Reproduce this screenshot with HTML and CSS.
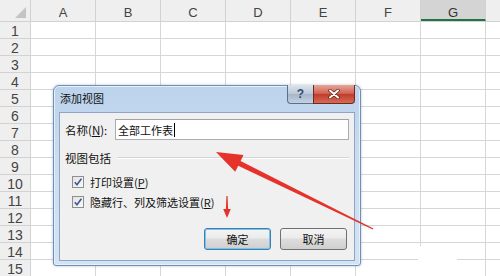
FILE: index.html
```html
<!DOCTYPE html>
<html lang="zh-CN">
<head>
  <meta charset="UTF-8" />
  <title>添加视图</title>
  <link rel="stylesheet" href="styles.css">
</head>
<body>

<div class="sheet">
  <div class="col-head">
    <div class="corner"><span class="tri"></span></div>
    <div class="ch">A</div>
    <div class="ch">B</div>
    <div class="ch">C</div>
    <div class="ch">D</div>
    <div class="ch">E</div>
    <div class="ch">F</div>
    <div class="ch selected">G</div>
    <div class="ch last"></div>
  </div>
  <div class="body">
    <div class="row-head">
      <div class="rh">1</div><div class="rh">2</div><div class="rh">3</div>
      <div class="rh">4</div><div class="rh">5</div><div class="rh">6</div>
      <div class="rh">7</div><div class="rh">8</div><div class="rh">9</div>
      <div class="rh">10</div><div class="rh">11</div><div class="rh">12</div>
      <div class="rh">13</div><div class="rh">14</div><div class="rh">15</div>
    </div>
    <div class="cells"></div>
  </div>
</div>

<div class="patch"></div>

<!-- 添加视图 dialog -->
<div class="dialog">
  <div class="titlebar">
    <span class="title">添加视图</span>
    <div class="caption-btns">
      <span class="cap-help">?</span>
      <span class="cap-close">
        <svg width="14" height="10" viewBox="0 0 14 10">
          <path d="M3 1.5 L11 8.5 M11 1.5 L3 8.5" stroke="#5a1f1a" stroke-width="3.4" stroke-linecap="round"/>
          <path d="M3 1.5 L11 8.5 M11 1.5 L3 8.5" stroke="#fff" stroke-width="2" stroke-linecap="round"/>
        </svg>
      </span>
    </div>
  </div>
  <div class="client">
    <div class="name-row">
      <label class="name-label">名称(<u>N</u>):</label>
      <div class="name-input">全部工作表<span class="caret"></span></div>
    </div>
    <div class="group">
      <span>视图包括</span>
      <i class="group-line"></i>
    </div>
    <label class="check first">
      <span class="box"><svg width="10" height="10" viewBox="0 0 10 10"><path d="M1.8 5.2 L4 7.8 L8.4 1.8" fill="none" stroke="#3e5a95" stroke-width="1.6"/></svg></span>
      打印设置(<u>P</u>)
    </label>
    <label class="check">
      <span class="box"><svg width="10" height="10" viewBox="0 0 10 10"><path d="M1.8 5.2 L4 7.8 L8.4 1.8" fill="none" stroke="#3e5a95" stroke-width="1.6"/></svg></span>
      隐藏行、列及筛选设置(<u>R</u>)
    </label>
    <div class="buttons">
      <button class="btn default">确定</button>
      <button class="btn">取消</button>
    </div>
  </div>
</div>

<!-- red annotation arrows -->
<svg class="marks" width="500" height="276" viewBox="0 0 500 276">
  <polygon fill="#e5322b" points="216,152 243.5,155 240.6,161 373.4,228.6 372.8,229.6 238.2,165.8 235.2,171.8"/>
  <polygon fill="#e5322b" points="227,218 230.8,209 228.1,209 227.6,196 226.4,196 225.9,209 223.2,209"/>
</svg>

</body>
</html>
```

FILE: styles.css
```css
* {
  box-sizing: border-box;
}
body {
  margin: 0;
  width: 500px;
  height: 276px;
  overflow: hidden;
  background: #fff;
  font-family: "Noto Sans CJK SC", "Liberation Sans", sans-serif;
  position: relative;
}

/* sheet */
.sheet {
  width: 500px;
  overflow: hidden;
}
.col-head {
  display: flex;
  height: 22px;
  background: #efefef;
  border-bottom: 1px solid #d2d2d2;
  overflow: hidden;
}
.corner {
  width: 31px;
  flex: none;
  border-right: 1px solid #d2d2d2;
  position: relative;
}
.corner .tri {
  position: absolute;
  right: 4px;
  bottom: 3px;
  width: 0;
  height: 0;
  border-left: 11px solid transparent;
  border-bottom: 11px solid #c4c4c4;
}
.ch {
  width: 65px;
  flex: none;
  border-right: 1px solid #d2d2d2;
  padding-top: 5px;
  text-align: center;
  font-family: "Liberation Sans", sans-serif;
  font-size: 13px;
  line-height: 16px;
  color: #444;
}
.ch.last {
  width: 14px;
  border-right: none;
}
.ch.selected {
  background: #d4d4d4;
  border-bottom: 2px solid #217346;
  color: #333;
}
.body {
  display: flex;
}
.row-head {
  width: 31px;
  flex: none;
  background: #efefef;
  border-right: 1px solid #d2d2d2;
}
.rh {
  height: 17px;
  border-bottom: 1px solid #d2d2d2;
  text-align: center;
  font-family: "Liberation Sans", sans-serif;
  font-size: 14px;
  line-height: 18px;
  color: #444;
}
.cells {
  flex: 1;
  height: 255px;
  background-color: #fff;
  background-image:
    linear-gradient(to right, transparent 64px, #d6d6d6 64px),
    linear-gradient(to bottom, transparent 16px, #d6d6d6 16px);
  background-size: 65px 17px;
}
.patch {
  position: absolute;
  left: 418px;
  top: 246px;
  width: 39px;
  height: 30px;
  background: #fff;
}

/* dialog */
.dialog {
  position: absolute;
  left: 53px;
  top: 85px;
  width: 308px;
  height: 181px;
  border: 1px solid #6f8fb6;
  border-radius: 6px 6px 3px 3px;
  background: linear-gradient(to bottom, #bcd3ec, #c9dcf1 40%, #d3e3f4);
  box-shadow: 0 0 3px rgba(60, 80, 110, 0.35), inset 0 0 0 1px #e6effa;
  padding: 0 5px 4px 5px;
  display: flex;
  flex-direction: column;
}
.titlebar {
  height: 26px;
  display: flex;
  justify-content: space-between;
  align-items: flex-start;
}
.title {
  padding: 4px 0 0 1px;
  font-size: 11px;
  line-height: 16px;
  color: #111;
}
.caption-btns {
  display: flex;
  margin-top: -1px;
}
.cap-help,
.cap-close {
  height: 19px;
  display: flex;
  align-items: center;
  justify-content: center;
  border: 1px solid #5f6f82;
  border-top: none;
}
.cap-help {
  width: 26px;
  border-radius: 0 0 0 4px;
  border-right: none;
  background: linear-gradient(to bottom, #dbe4ee, #b9c7d7 50%, #a5b6ca 51%, #c3d2e2);
  font-family: "Liberation Sans", sans-serif;
  font-weight: bold;
  font-size: 12px;
  color: #3a4b63;
}
.cap-close {
  width: 42px;
  border-radius: 0 0 4px 0;
  border-color: #6d2a22;
  background: linear-gradient(to bottom, #e6a699, #cf5d4d 50%, #c23a2a 51%, #d66a55);
}
.client {
  flex: 1;
  background: #f0f0f0;
  border: 1px solid #8ea6c4;
  padding: 6px 5px 0 5px;
  font-size: 11px;
  color: #111;
}
.name-row {
  display: flex;
  align-items: center;
  height: 21px;
}
.name-label {
  width: 50px;
  flex: none;
  font-size: 11.5px;
}
.name-input {
  flex: 1;
  height: 21px;
  background: #fff;
  border: 1px solid #abadb3;
  border-top-color: #9fa3ab;
  padding-left: 2px;
  display: flex;
  align-items: center;
  font-size: 11px;
}
.caret {
  width: 1px;
  height: 14px;
  background: #000;
  margin-left: 1px;
}
.group {
  margin-top: 11px;
  height: 14px;
  display: flex;
  align-items: center;
  font-size: 11.5px;
}
.group-line {
  flex: 1;
  height: 2px;
  margin-left: 6px;
  border-top: 1px solid #d5d5d5;
  border-bottom: 1px solid #fff;
}
.check {
  display: flex;
  align-items: center;
  height: 14px;
  margin-top: 6px;
  padding-left: 7px;
  line-height: 14px;
}
.check.first {
  margin-top: 10px;
}
.box {
  width: 12px;
  height: 12px;
  margin-right: 6px;
  border: 1px solid #8f8f8f;
  background: linear-gradient(to bottom right, #e3e3e3, #f9f9f9);
  display: flex;
  align-items: center;
  justify-content: center;
}
.buttons {
  display: flex;
  justify-content: flex-end;
  gap: 9px;
  margin-top: 19px;
  padding-right: 2px;
}
.btn {
  width: 67px;
  height: 22px;
  margin: 0;
  padding: 0;
  border: 1px solid #707070;
  border-radius: 3px;
  background: linear-gradient(to bottom, #f4f4f4, #ebebeb 45%, #dddddd 50%, #cfcfcf);
  font-family: "Noto Sans CJK SC", sans-serif;
  font-size: 11px;
  color: #111;
}
.btn.default {
  border-color: #3c7fb1;
  box-shadow: inset 0 0 0 1px #7cc3ec;
}
.marks {
  position: absolute;
  left: 0;
  top: 0;
  pointer-events: none;
}
```
